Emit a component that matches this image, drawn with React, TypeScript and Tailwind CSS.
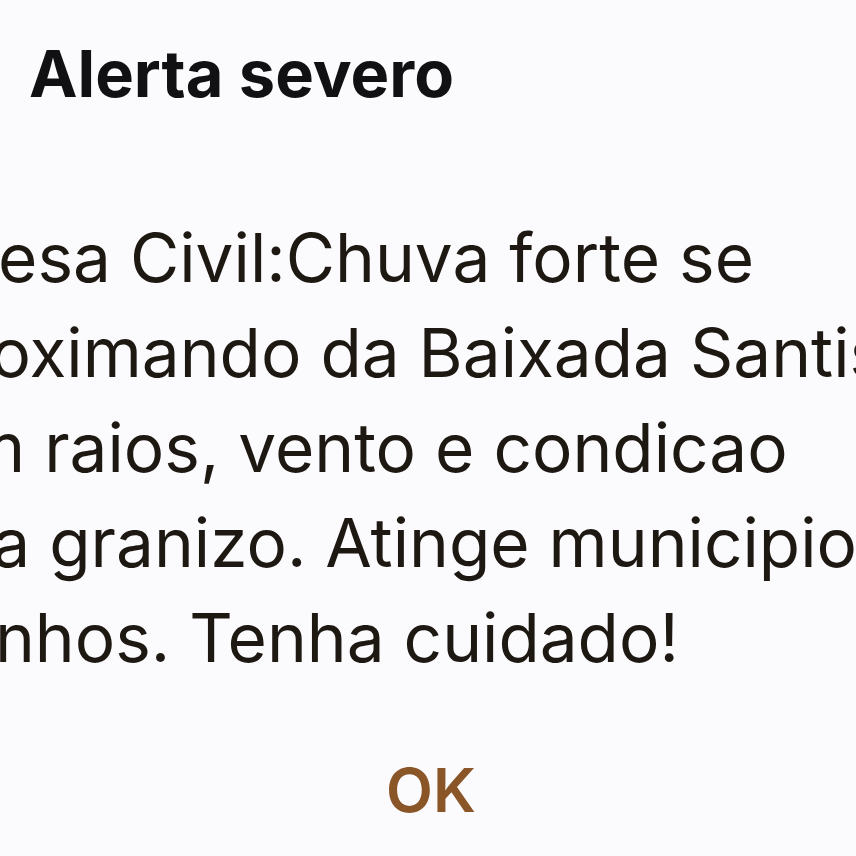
const LINES = [
  "Defesa Civil:Chuva forte se",
  "aproximando da Baixada Santista",
  "com raios, vento e condicao",
  "para granizo. Atinge municipios",
  "vizinhos. Tenha cuidado!",
];

export default function App() {
  return (
    <div className="h-[856px] w-[856px] overflow-hidden bg-[#fbfafd] font-['Inter',sans-serif]">
      <div className="pl-[29px] pt-[41px]">
        <h1 className="whitespace-nowrap text-[65px] font-bold leading-none text-[#111013]">
          Alerta severo
        </h1>
      </div>

      <div className="ml-[-113px] mt-[104px] flex flex-col">
        {LINES.map((line) => (
          <p
            key={line}
            className="whitespace-nowrap text-[67.5px] font-normal leading-[95px] text-[#1e1812]"
          >
            {line}
          </p>
        ))}
      </div>

      <div className="mt-[75px] flex justify-center pl-[6px]">
        <button className="text-[61px] font-semibold leading-none text-[#8a5527]">
          OK
        </button>
      </div>
    </div>
  );
}
